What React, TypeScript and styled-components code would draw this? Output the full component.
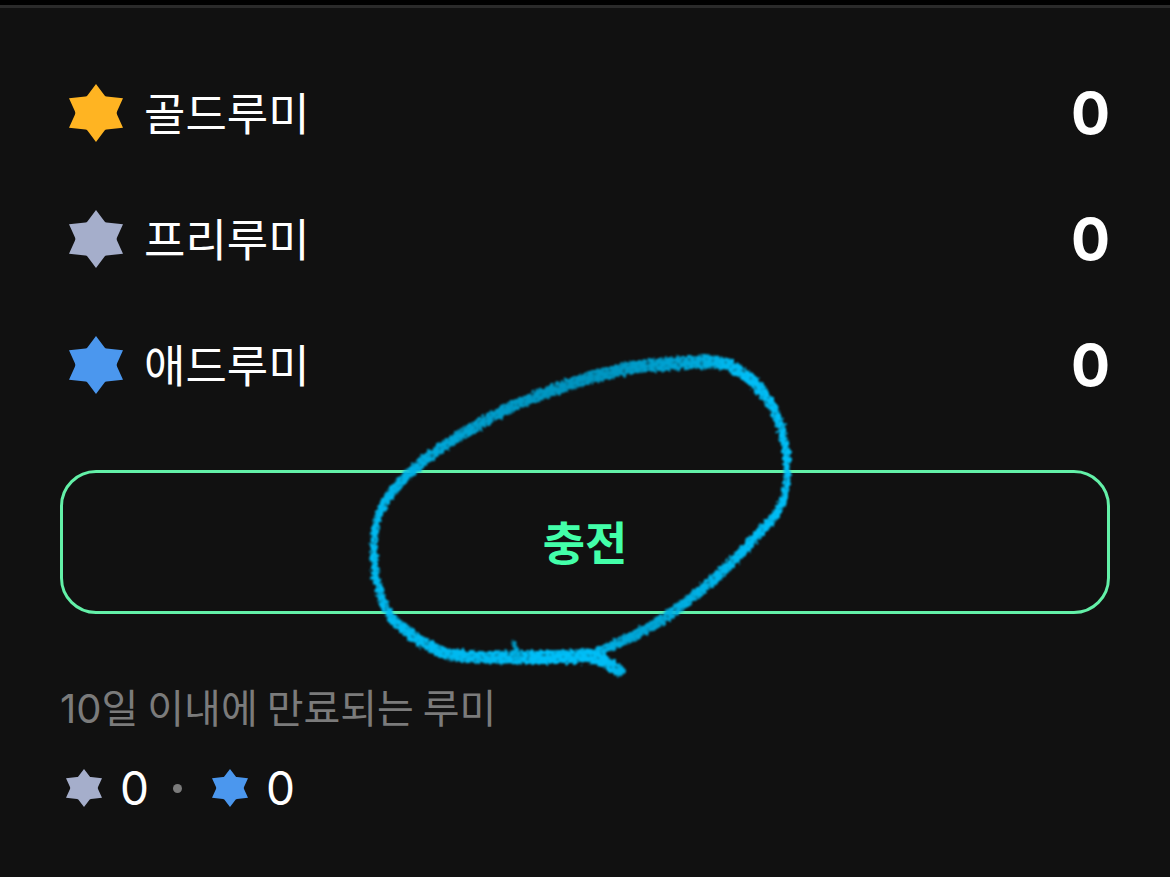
import React from "react";
import styled, { createGlobalStyle } from "styled-components";

const GlobalStyle = createGlobalStyle`
  *, *::before, *::after { box-sizing: border-box; }
  body {
    margin: 0;
    background: #111111;
    color: #ffffff;
    font-family: Inter, "Noto Sans CJK KR", sans-serif;
  }
`;

const colors = {
  gold: "#ffb422",
  free: "#a5aecb",
  ad: "#4b97ee",
  mint: "#43ffa9",
  outline: "#63f0a8",
  muted: "#7b7b7b",
};

const Sheet = styled.main`
  border-top: 5px solid #000000;
`;

const Wallet = styled.section`
  display: flex;
  flex-direction: column;
  padding: 76px 60px 64px;
  border-top: 3px solid #2a2a2a;
`;

const BalanceList = styled.ul`
  display: flex;
  flex-direction: column;
  gap: 68px;
  margin: 0;
  padding: 0;
  list-style: none;
`;

const BalanceRow = styled.li`
  display: flex;
  align-items: center;
  gap: 12px;
  height: 58px;
`;

const BalanceName = styled.span`
  flex: 1;
  padding-top: 4px;
  font-size: 45px;
  line-height: 56px;
`;

const BalanceValue = styled.strong`
  font-size: 58px;
  font-weight: 700;
  line-height: 58px;
`;

const IconBox = styled.span<{ $small?: boolean }>`
  display: flex;
  justify-content: center;
  width: ${(p) => (p.$small ? 48 : 72)}px;

  svg {
    display: block;
    width: ${(p) => (p.$small ? 36 : 54)}px;
    height: ${(p) => (p.$small ? 38 : 58)}px;
  }
`;

const ChargeArea = styled.div`
  position: relative;
  margin-top: 76px;
`;

const ChargeButton = styled.button`
  display: block;
  width: 100%;
  height: 144px;
  padding: 2px 0 0;
  border: 3px solid ${colors.outline};
  border-radius: 36px;
  background: transparent;
  color: ${colors.mint};
  font-family: inherit;
  font-size: 46px;
  font-weight: 700;
  line-height: 60px;
  cursor: pointer;
`;

const Scribble = styled.svg`
  position: absolute;
  top: -130px;
  left: 50%;
  width: 460px;
  height: 360px;
  margin-left: -235px;
  pointer-events: none;
`;

const Caption = styled.h2`
  margin: 68px 0 0;
  color: ${colors.muted};
  font-family: "Noto Sans CJK KR", sans-serif;
  font-size: 40px;
  font-weight: 400;
  line-height: 48px;
`;

const Days = styled.span`
  font-family: Inter, sans-serif;
  line-height: 32px;
`;

const ExpiryRow = styled.div`
  display: flex;
  align-items: center;
  gap: 24px;
  height: 48px;
  margin-top: 34px;
`;

const ExpiryItem = styled.span`
  display: flex;
  align-items: center;
  gap: 12px;
  font-size: 46px;
  line-height: 48px;
`;

const Dot = styled.span`
  width: 9px;
  height: 9px;
  border-radius: 50%;
  background: ${colors.muted};
`;

function Star({ color, small }: { color: string; small?: boolean }) {
  return (
    <IconBox $small={small}>
      <svg viewBox="0 0 54 58" preserveAspectRatio="none" aria-hidden="true">
        <path
          fill={color}
          d="M27 0 35.6 11.4Q36.3 12.3 37.5 12.4L54 14.2 48 27.6Q47.4 29 48 30.4L54 43.8 37.5 45.6Q36.3 45.7 35.6 46.6L27 58 18.4 46.6Q17.7 45.7 16.5 45.6L0 43.8 6 30.4Q6.6 29 6 27.6L0 14.2 16.5 12.4Q17.7 12.3 18.4 11.4Z"
        />
      </svg>
    </IconBox>
  );
}

/* Each entry: x, y, stroke width, strength of the crayon pigment. */
type Mark = [number, number, number, number];

const loop: Mark[] = [
  [588, 655, 12, 1],
  [567, 657, 13, 1],
  [517, 657, 12, 1],
  [480, 657, 11, 0.97],
  [448, 654, 11, 0.97],
  [428, 645, 10, 0.97],
  [405, 630, 10, 0.97],
  [389, 614, 8, 0.97],
  [379, 590, 7, 0.97],
  [374, 557, 6, 0.97],
  [377, 520, 6, 0.97],
  [390, 495, 8, 0.95],
  [413, 470, 9, 0.92],
  [440, 449, 9, 0.88],
  [473, 428, 10, 0.84],
  [505, 410, 10, 0.8],
  [540, 395, 10, 0.78],
  [580, 381, 11, 0.76],
  [630, 368, 12, 0.78],
  [680, 363, 12, 0.84],
  [708, 362, 12, 0.88],
  [728, 365, 11, 0.95],
  [750, 379, 10, 1],
  [768, 400, 9, 1],
  [779, 422, 8, 1],
  [786, 450, 7, 1],
  [787, 475, 6, 1],
  [784, 497, 6, 1],
  [773, 518, 7, 1],
  [760, 532, 9, 1],
  [740, 554, 9, 0.98],
  [713, 580, 9, 0.95],
  [673, 612, 9, 0.9],
  [650, 627, 9, 0.85],
  [620, 642, 9, 0.87],
  [590, 655, 8, 0.95],
];
const tail: Mark[] = [
  [580, 656, 11, 1],
  [597, 658, 12, 1],
  [610, 665, 11, 1],
  [620, 671, 10, 0.95],
];
const tick: Mark[] = [
  [514, 640, 1, 0.8],
  [515, 648, 4, 0.8],
  [517, 656, 9, 0.9],
];

function curve(a: number, b: number, c: number, d: number, t: number) {
  return (
    0.5 *
    (2 * b +
      (c - a) * t +
      (2 * a - 5 * b + 4 * c - d) * t * t +
      (3 * b - a - 3 * c + d) * t * t * t)
  );
}

function smooth(marks: Mark[]): Mark[] {
  const out: Mark[] = [];
  for (let i = 0; i < marks.length - 1; i++) {
    const a = marks[Math.max(0, i - 1)];
    const b = marks[i];
    const c = marks[i + 1];
    const d = marks[Math.min(marks.length - 1, i + 2)];
    for (let s = 0; s < 6; s++) {
      const t = s / 6;
      out.push([
        curve(a[0], b[0], c[0], d[0], t),
        curve(a[1], b[1], c[1], d[1], t),
        b[2] + (c[2] - b[2]) * t,
        b[3] + (c[3] - b[3]) * t,
      ]);
    }
  }
  out.push(marks[marks.length - 1]);
  return out;
}

function Crayon({ marks }: { marks: Mark[] }) {
  const points = smooth(marks);
  return (
    <>
      {points.slice(1).map((p, i) => (
        <line
          key={i}
          x1={points[i][0]}
          y1={points[i][1]}
          x2={p[0]}
          y2={p[1]}
          strokeWidth={p[2] + 1}
          stroke={`rgb(0, ${Math.round(14 + 180 * p[3])}, ${Math.round(14 + 238 * p[3])})`}
        />
      ))}
    </>
  );
}

function HandDrawnLoop() {
  return (
    <Scribble viewBox="350 340 460 360" aria-hidden="true">
      <defs>
        <filter
          id="crayon"
          filterUnits="userSpaceOnUse"
          x="350"
          y="340"
          width="460"
          height="360"
          colorInterpolationFilters="sRGB"
        >
          <feTurbulence type="fractalNoise" baseFrequency="0.26" numOctaves="2" seed="7" result="noise" />
          <feDisplacementMap in="SourceGraphic" in2="noise" scale="7" xChannelSelector="R" yChannelSelector="G" result="rough" />
          <feColorMatrix in="noise" type="matrix" values="0 0 0 0 1  0 0 0 0 1  0 0 0 0 1  0 0 2 0 0.15" result="grain" />
          <feComposite in="rough" in2="grain" operator="in" result="grained" />
          <feGaussianBlur in="grained" stdDeviation="0.8" />
        </filter>
      </defs>
      <g filter="url(#crayon)" fill="none" strokeLinecap="round" opacity="0.98">
        <Crayon marks={loop} />
        <Crayon marks={tail} />
        <Crayon marks={tick} />
      </g>
    </Scribble>
  );
}

const balances = [
  { name: "골드루미", value: 0, color: colors.gold },
  { name: "프리루미", value: 0, color: colors.free },
  { name: "애드루미", value: 0, color: colors.ad },
];

export default function App() {
  return (
    <>
      <GlobalStyle />
      <Sheet>
        <Wallet>
          <BalanceList>
            {balances.map((b) => (
              <BalanceRow key={b.name}>
                <Star color={b.color} />
                <BalanceName>{b.name}</BalanceName>
                <BalanceValue>{b.value}</BalanceValue>
              </BalanceRow>
            ))}
          </BalanceList>
          <ChargeArea>
            <ChargeButton type="button">충전</ChargeButton>
            <HandDrawnLoop />
          </ChargeArea>
          <Caption>
            <Days>10</Days>일 이내에 만료되는 루미
          </Caption>
          <ExpiryRow>
            <ExpiryItem>
              <Star color={colors.free} small />0
            </ExpiryItem>
            <Dot />
            <ExpiryItem>
              <Star color={colors.ad} small />0
            </ExpiryItem>
          </ExpiryRow>
        </Wallet>
      </Sheet>
    </>
  );
}
